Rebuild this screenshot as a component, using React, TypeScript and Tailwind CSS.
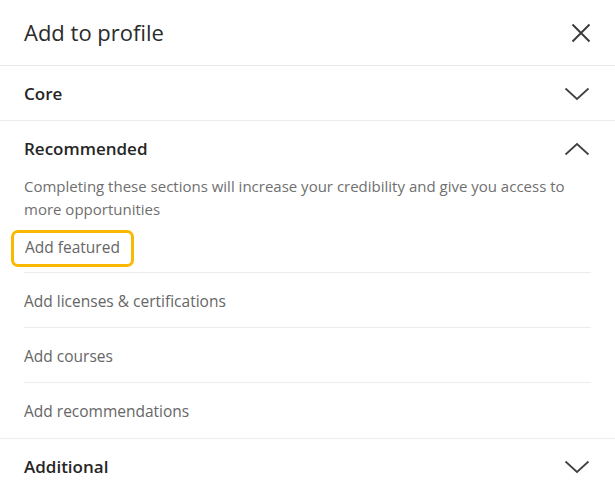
import React from 'react';

const font = { fontFamily: '"Open Sans", "Noto Sans", sans-serif' };

function Chevron({ up = false }: { up?: boolean }) {
  return (
    <svg width="26" height="14" viewBox="0 0 26 14" fill="none" className="text-[#404040]">
      <path
        d={up ? 'M1.5 12.5 L13 2 L24.5 12.5' : 'M1.5 1.5 L13 12 L24.5 1.5'}
        stroke="currentColor"
        strokeWidth="1.7"
      />
    </svg>
  );
}

function SectionHeader({ title, open = false }: { title: string; open?: boolean }) {
  return (
    <div className="flex items-center justify-between h-[54px] pl-6 pr-[25px] pt-[2px]">
      <span className="text-[17px] font-semibold text-[#262626]">{title}</span>
      <Chevron up={open} />
    </div>
  );
}

const items = ['Add licenses & certifications', 'Add courses', 'Add recommendations'];

export default function App() {
  return (
    <div className="w-[615px] h-[490px] bg-white overflow-hidden" style={font}>
      <div className="flex items-center justify-between h-[66px] pl-6 pr-6 border-b border-[#e8e8e8]">
        <h1 className="text-[22px] text-[#2b2b2b] font-normal">Add to profile</h1>
        <svg width="20" height="20" viewBox="0 0 20 20" className="text-[#3a3a3a]">
          <path d="M1.5 1.5 L18.5 18.5 M18.5 1.5 L1.5 18.5" stroke="currentColor" strokeWidth="1.9" />
        </svg>
      </div>

      <div className="border-b border-[#ececec]">
        <SectionHeader title="Core" />
      </div>

      <div className="border-b border-[#ececec]">
        <SectionHeader title="Recommended" open />
        <p className="px-6 text-[15px] leading-[23px] text-[#6f6f6f]">
          Completing these sections will increase your credibility and give you access to more opportunities
        </p>
        <div className="px-6">
          <div className="h-[52px] pt-[3px] flex items-center border-b border-[#ececec]">
            <span className="-ml-[13px] px-[11px] h-[37px] flex items-center rounded-[7px] border-[3px] border-[#fbb800] text-[15.5px] text-[#666]">
              Add featured
            </span>
          </div>
          {items.map((label, i) => (
            <div
              key={label}
              className={`h-[55px] pt-[3px] flex items-center ${i < items.length - 1 ? 'border-b border-[#ececec]' : ''}`}
            >
              <span className="text-[15.5px] text-[#666]">{label}</span>
            </div>
          ))}
        </div>
      </div>

      <SectionHeader title="Additional" />
    </div>
  );
}
